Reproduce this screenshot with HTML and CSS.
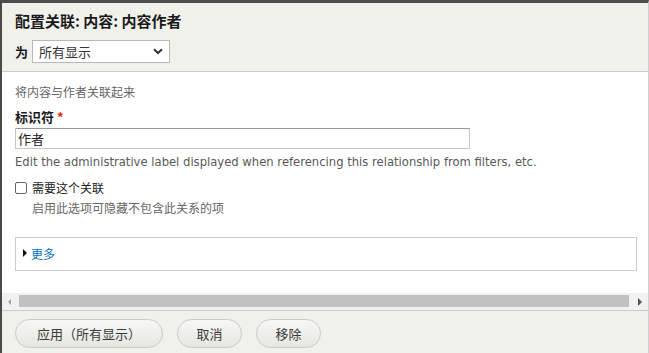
FILE: index.html
```html
<!DOCTYPE html>
<html lang="zh">
<head>
<meta charset="utf-8">
<title>配置关联</title>
<link rel="stylesheet" href="styles.css">
</head>
<body>
<div class="dialog">
  <div class="header">
    <h1 class="title">配置关联: 内容: 内容作者</h1>
    <div class="for-row">
      <label class="for-label">为</label>
      <div class="select">
        <span>所有显示</span>
        <svg class="chev" width="10" height="7" viewBox="0 0 10 7"><path d="M1 1.2 L5 5 L9 1.2" fill="none" stroke="#333" stroke-width="2"/></svg>
      </div>
    </div>
  </div>
  <div class="content">
    <div class="intro">将内容与作者关联起来</div>
    <div class="label">标识符 <span class="req">*</span></div>
    <div class="input">作者</div>
    <div class="desc">Edit the administrative label displayed when referencing this relationship from filters, etc.</div>
    <div class="check-row">
      <span class="checkbox"></span>
      <span class="check-label">需要这个关联</span>
    </div>
    <div class="check-desc">启用此选项可隐藏不包含此关系的项</div>
    <div class="details">
      <span class="tri"></span>
      <span class="more">更多</span>
    </div>
  </div>
  <div class="hscroll">
    <span class="arrow-left"></span>
    <div class="thumb"></div>
    <span class="arrow-right"></span>
  </div>
  <div class="footer">
    <button class="btn btn-wide">应用（所有显示）</button>
    <button class="btn">取消</button>
    <button class="btn">移除</button>
  </div>
</div>
</body>
</html>
```
FILE: styles.css
```css
* { box-sizing: border-box; }
html, body { margin: 0; padding: 0; background: #ffffff; }
body {
  font-family: "Noto Sans CJK SC", "DejaVu Sans", sans-serif;
  color: #222;
}
.dialog {
  width: 649px;
  height: 353px;
  border-top: 3px solid #4d4d4d;
  border-left: 2px solid #4a4a4a;
  border-right: 1px solid #cfcfcf;
  display: flex;
  flex-direction: column;
  overflow: hidden;
}
.header {
  height: 69px;
  flex: none;
  background: #f1f1ec;
  border-bottom: 1px solid #cccccc;
  padding: 8px 13px 0;
}
.title {
  margin: 0;
  font-size: 15px;
  line-height: 20px;
  font-weight: bold;
  color: #1a1a1a;
}
.for-row {
  margin-top: 9px;
  display: flex;
  align-items: center;
  gap: 4px;
  height: 23px;
}
.for-label {
  font-size: 13px;
  font-weight: bold;
  color: #1a1a1a;
}
.select {
  width: 138px;
  height: 23px;
  background: #fff;
  border: 1px solid #b8b8b8;
  display: flex;
  align-items: center;
  justify-content: space-between;
  padding: 0 6px 0 6px;
  font-size: 13px;
  color: #333;
}
.content {
  flex: 1;
  background: #fff;
  padding: 11px 13px 0;
}
.intro {
  font-size: 12px;
  line-height: 18px;
  color: #666;
}
.label {
  margin-top: 7px;
  font-size: 13px;
  line-height: 18px;
  font-weight: bold;
  color: #1a1a1a;
}
.req { color: #e62600; }
.input {
  margin-top: 2px;
  width: 455px;
  height: 21px;
  border: 1px solid #c6c6c6;
  border-top-color: #999;
  padding: 0 2px;
  font-size: 13px;
  line-height: 19px;
  color: #222;
}
.desc {
  margin-top: 4px;
  font-family: "DejaVu Sans", sans-serif;
  font-size: 11.6px;
  line-height: 18px;
  color: #595959;
}
.check-row {
  margin-top: 8px;
  display: flex;
  align-items: center;
  height: 18px;
}
.checkbox {
  width: 12px;
  height: 12px;
  border: 1px solid #666;
  border-radius: 2px;
  background: #fff;
  margin-right: 5px;
}
.check-label {
  font-size: 12px;
  line-height: 18px;
  color: #1a1a1a;
}
.check-desc {
  margin-top: 2px;
  padding-left: 17px;
  font-size: 12px;
  line-height: 18px;
  color: #666;
}
.details {
  margin-top: 20px;
  width: 622px;
  height: 34px;
  border: 1px solid #cccccc;
  display: flex;
  align-items: center;
  padding: 0 0 2px 7px;
}
.tri {
  width: 0;
  height: 0;
  border-top: 4px solid transparent;
  border-bottom: 4px solid transparent;
  border-left: 4px solid #111;
  margin-right: 4px;
}
.more {
  font-size: 12px;
  color: #0074bd;
}
.hscroll {
  flex: none;
  height: 18px;
  background: #f1f1f1;
  border-bottom: 1px solid #cccccc;
  display: flex;
  align-items: flex-start;
  padding-top: 2px;
}
.arrow-left {
  margin: 4px 0 0 6px;
  width: 0;
  height: 0;
  border-top: 3px solid transparent;
  border-bottom: 3px solid transparent;
  border-right: 3px solid #a3a3a3;
}
.thumb {
  margin-left: 8px;
  width: 610px;
  height: 12px;
  background: #c1c1c1;
}
.arrow-right {
  margin: 3px 0 0 9px;
  width: 0;
  height: 0;
  border-top: 4px solid transparent;
  border-bottom: 4px solid transparent;
  border-left: 4px solid #505050;
}
.footer {
  flex: none;
  height: 42px;
  background: #f1f1ec;
  padding: 8px 13px 0;
  display: flex;
  align-items: flex-start;
  gap: 14px;
}
.btn {
  height: 29px;
  padding: 0 18.5px;
  border: 1px solid #cacaca;
  border-radius: 15px;
  background: linear-gradient(#f7f7f4, #e6e6e1);
  font-family: "Noto Sans CJK SC", sans-serif;
  font-size: 13px;
  color: #3b3b3b;
  line-height: 27px;
}
.btn-wide {
  padding: 0 21px;
}
```
